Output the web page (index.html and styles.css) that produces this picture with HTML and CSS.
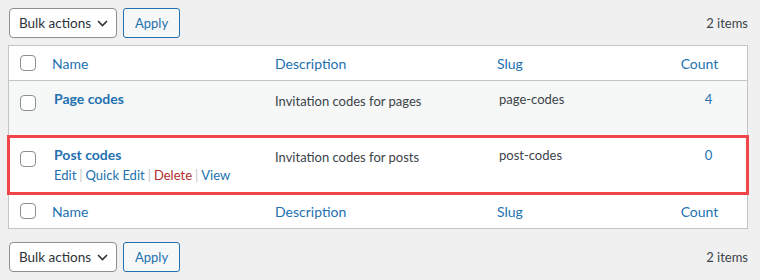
FILE: index.html
```html
<!DOCTYPE html>
<html lang="en">
<head>
    <meta charset="UTF-8">
    <title>Invitation codes</title>
    <link rel="stylesheet" href="styles.css">
</head>
<body>

<div class="wrap">
    <div class="tablenav">
        <div class="bulk">
            <div class="select">Bulk actions
                <svg width="11" height="7" viewBox="0 0 11 7"><path d="M1 1l4.5 4.5L10 1" fill="none" stroke="#2c3338" stroke-width="1.6"/></svg>
            </div>
            <button class="button">Apply</button>
        </div>
        <div class="items">2 items</div>
    </div>

    <div class="table">
        <div class="row head">
            <div class="cell cb"><span class="check"></span></div>
            <div class="cell th">Name</div>
            <div class="cell th">Description</div>
            <div class="cell th">Slug</div>
            <div class="cell th num">Count</div>
        </div>

        <div class="row item alt">
            <div class="cell cb"><span class="check"></span></div>
            <div class="cell name"><a class="row-title">Page codes</a></div>
            <div class="cell desc">Invitation codes for pages</div>
            <div class="cell slug">page-codes</div>
            <div class="cell count"><a>4</a></div>
        </div>

        <div class="row item hover">
            <div class="cell cb"><span class="check"></span></div>
            <div class="cell name">
                <a class="row-title">Post codes</a>
                <div class="row-actions">
                    <a>Edit</a><span class="sep">|</span><a>Quick Edit</a><span class="sep">|</span><a class="delete">Delete</a><span class="sep">|</span><a>View</a>
                </div>
            </div>
            <div class="cell desc">Invitation codes for posts</div>
            <div class="cell slug">post-codes</div>
            <div class="cell count"><a>0</a></div>
        </div>

        <div class="row head foot">
            <div class="cell cb"><span class="check"></span></div>
            <div class="cell th">Name</div>
            <div class="cell th">Description</div>
            <div class="cell th">Slug</div>
            <div class="cell th num">Count</div>
        </div>
    </div>

    <div class="tablenav bottom">
        <div class="bulk">
            <div class="select">Bulk actions
                <svg width="11" height="7" viewBox="0 0 11 7"><path d="M1 1l4.5 4.5L10 1" fill="none" stroke="#2c3338" stroke-width="1.6"/></svg>
            </div>
            <button class="button">Apply</button>
        </div>
        <div class="items">2 items</div>
    </div>
</div>

</body>
</html>
```

FILE: styles.css
```css
* {
    box-sizing: border-box;
}

body {
    margin: 0;
    background: #f0f0f1;
    font-family: 'Lato', sans-serif;
    font-size: 13px;
    color: #3c434a;
}

a {
    color: #2271b1;
    text-decoration: none;
}

.wrap {
    padding: 8px 12px 0 8px;
}

/* top and bottom action bars */
.tablenav {
    display: flex;
    justify-content: space-between;
    align-items: center;
    height: 30px;
    margin-bottom: 7px;
}

.tablenav.bottom {
    margin: 13px 0 0;
}

.bulk {
    display: flex;
    gap: 6px;
    padding-left: 1px;
}

.select {
    display: flex;
    align-items: center;
    width: 108px;
    height: 30px;
    padding: 0 8px 0 9px;
    background: #fff;
    border: 1px solid #8c8f94;
    border-radius: 4px;
    color: #2c3338;
    font-size: 13.5px;
}

.select svg {
    margin-left: auto;
}

.button {
    height: 30px;
    padding: 0 11px;
    background: #f6f7f7;
    border: 1px solid #2271b1;
    border-radius: 3px;
    color: #2271b1;
    font-family: inherit;
    font-size: 13px;
}

/* list table */
.table {
    background: #fff;
    border: 1px solid #c3c4c7;
}

.row {
    display: grid;
    grid-template-columns: 33px 223px 222px 165px 1fr;
}

.head {
    height: 35px;
    align-items: center;
    border-bottom: 1px solid #c3c4c7;
}

.foot {
    border-bottom: none;
    border-top: 1px solid #c3c4c7;
}

.cell {
    padding: 0 10px;
}

.cb {
    padding: 0 0 0 11px;
    display: flex;
}

.check {
    display: block;
    width: 16px;
    height: 16px;
    border: 1px solid #8c8f94;
    border-radius: 4px;
    background: #fff;
}

.th {
    color: #2271b1;
    font-size: 14px;
}

.num {
    text-align: center;
}

.item {
    height: 56px;
}

.item .cell {
    padding-top: 8px;
    line-height: 20px;
}

.item .cb {
    padding-top: 14px;
}

.alt {
    background: #f6f7f7;
}

.hover {
    outline: 3px solid #f0464a;
    outline-offset: -1px;
}

.item .name {
    padding-left: 12px;
}

.row-title {
    font-size: 14px;
    font-weight: 700;
}

.row-actions {
    padding-top: 1px;
    line-height: 18px;
}

.sep {
    color: #c3c4c7;
    margin: 0 3px;
}

.delete {
    color: #b32d2e;
}

.item .desc {
    padding-top: 10px;
}

.item .slug {
    padding-left: 12px;
}

.count {
    text-align: center;
    padding-left: 28px;
}
```
